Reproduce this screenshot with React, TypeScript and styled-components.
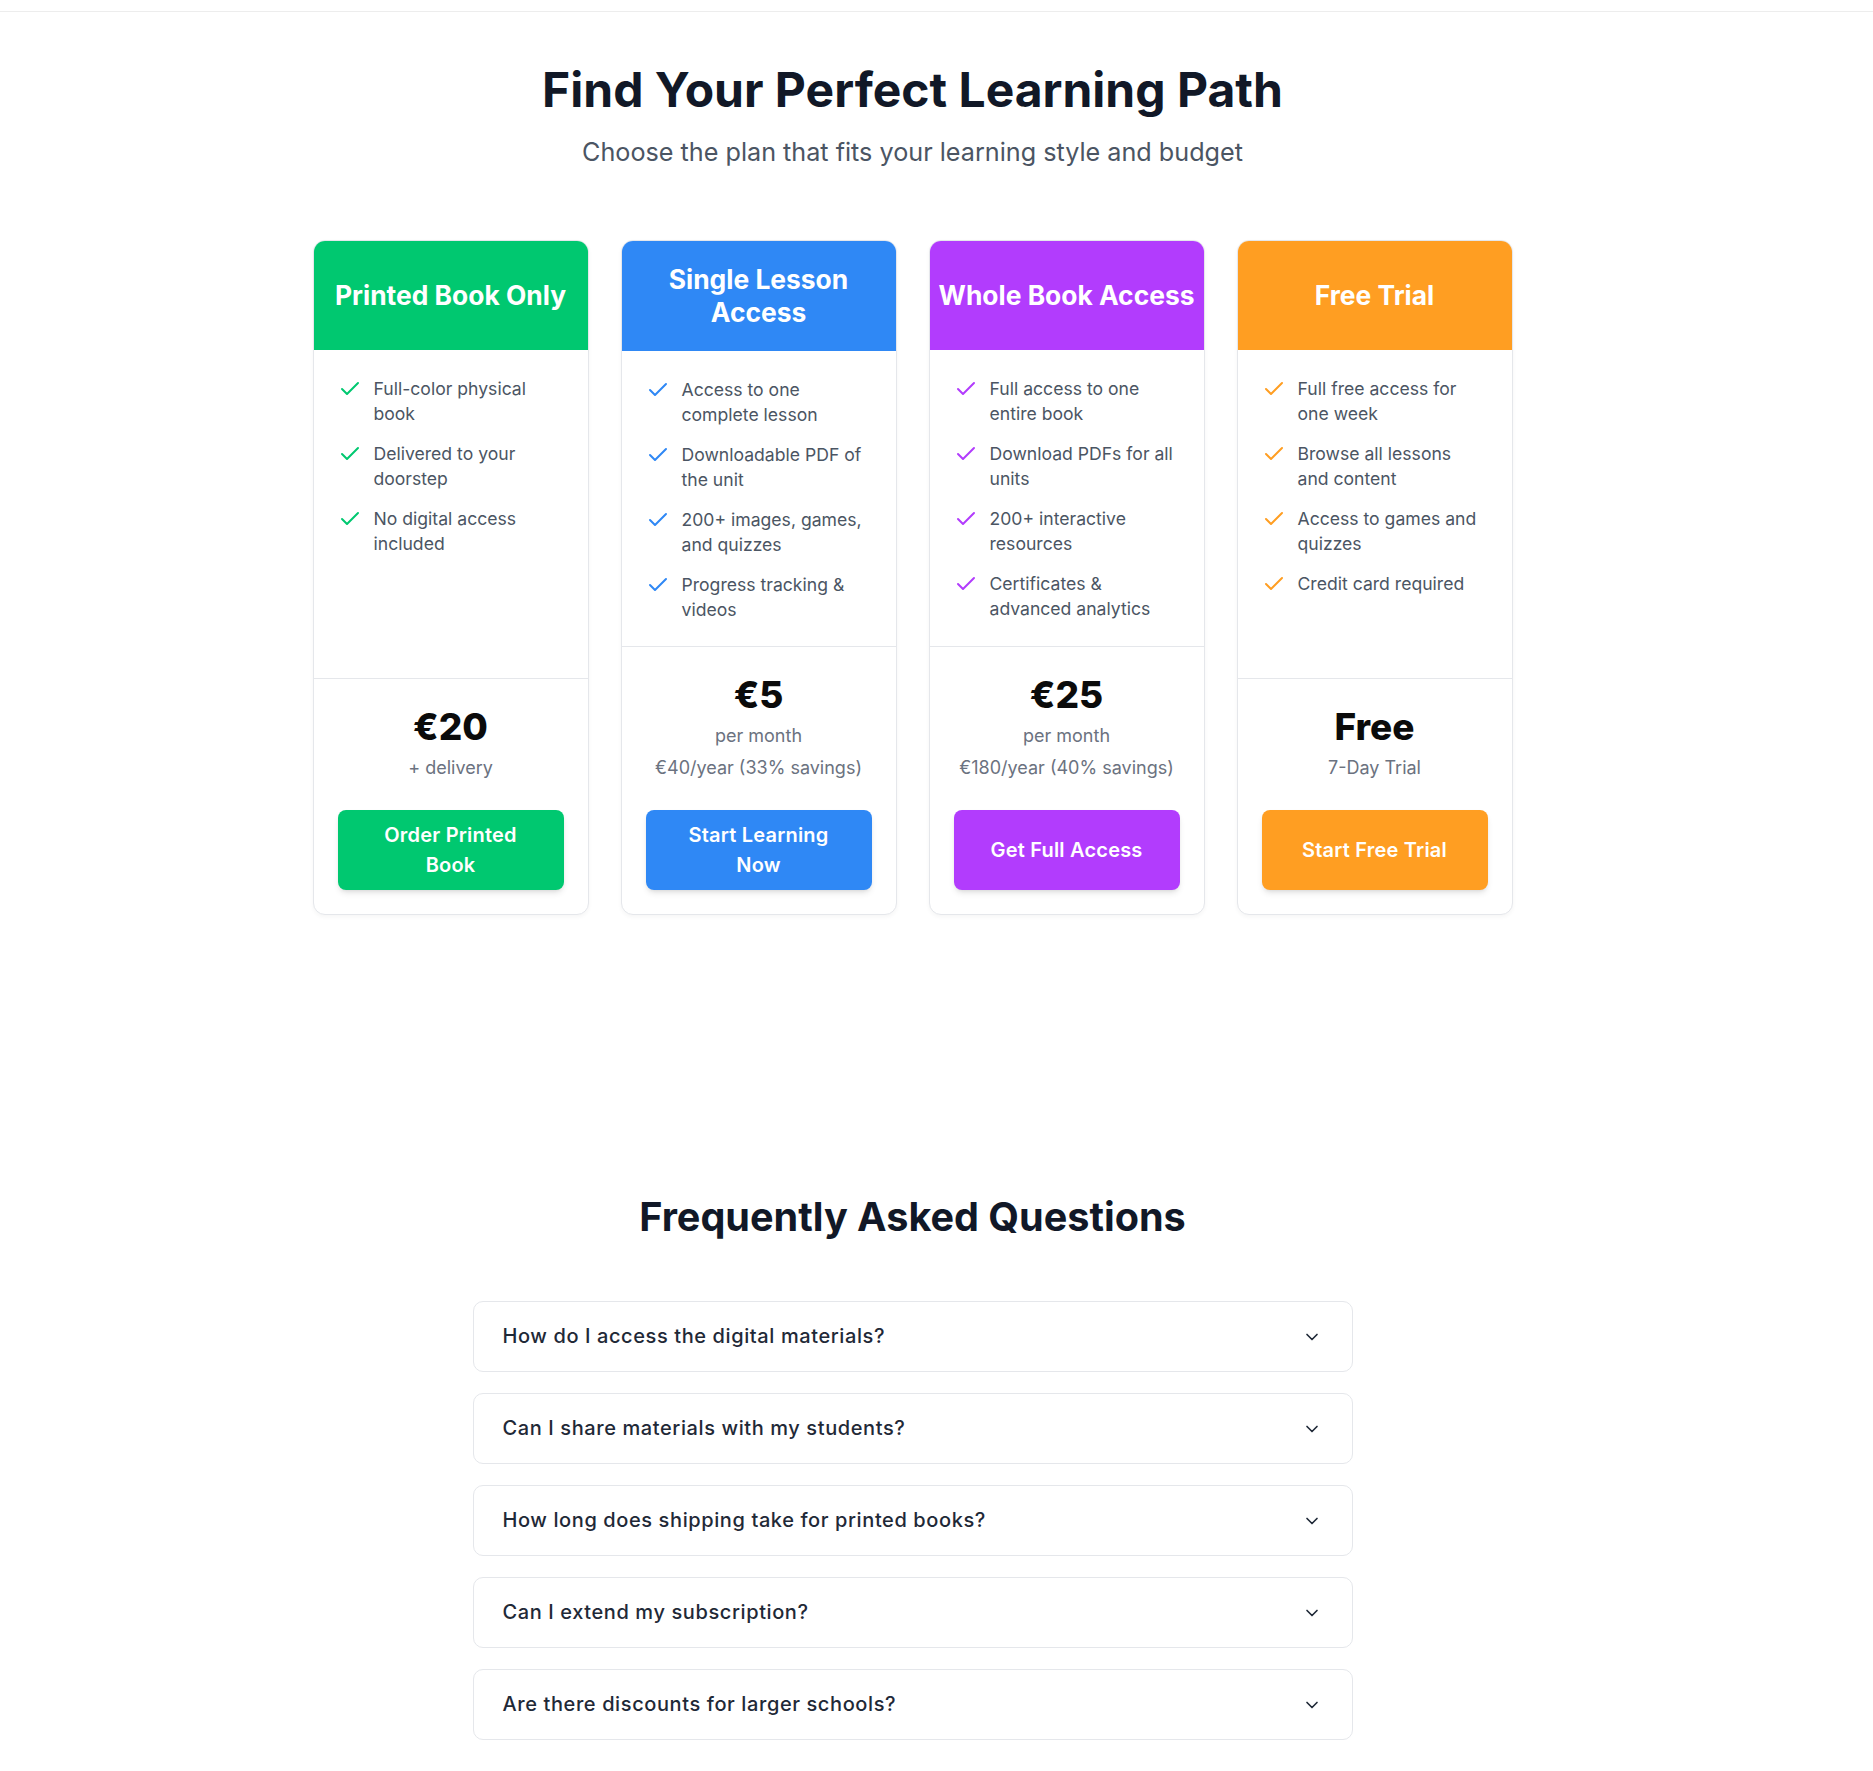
import React from 'react';
import styled, { createGlobalStyle } from 'styled-components';
import { Check, ChevronDown } from 'lucide-react';

const GlobalStyle = createGlobalStyle`
  *, *::before, *::after { box-sizing: border-box; }
  body {
    margin: 0;
    background: #ffffff;
    font-family: Inter, "Noto Sans", sans-serif;
    color: #111827;
  }
`;

type Plan = {
  title: string;
  color: string;
  features: string[];
  price: string;
  notes: string[];
  cta: string;
};

const plans: Plan[] = [
  {
    title: 'Printed Book Only',
    color: '#00c870',
    features: ['Full-color physical book', 'Delivered to your doorstep', 'No digital access included'],
    price: '€20',
    notes: ['+ delivery'],
    cta: 'Order Printed Book',
  },
  {
    title: 'Single Lesson Access',
    color: '#2f88f5',
    features: [
      'Access to one complete lesson',
      'Downloadable PDF of the unit',
      '200+ images, games, and quizzes',
      'Progress tracking & videos',
    ],
    price: '€5',
    notes: ['per month', '€40/year (33% savings)'],
    cta: 'Start Learning Now',
  },
  {
    title: 'Whole Book Access',
    color: '#b23cfd',
    features: [
      'Full access to one entire book',
      'Download PDFs for all units',
      '200+ interactive resources',
      'Certificates & advanced analytics',
    ],
    price: '€25',
    notes: ['per month', '€180/year (40% savings)'],
    cta: 'Get Full Access',
  },
  {
    title: 'Free Trial',
    color: '#ff9e22',
    features: [
      'Full free access for one week',
      'Browse all lessons and content',
      'Access to games and quizzes',
      'Credit card required',
    ],
    price: 'Free',
    notes: ['7-Day Trial'],
    cta: 'Start Free Trial',
  },
];

const faqs = [
  'How do I access the digital materials?',
  'Can I share materials with my students?',
  'How long does shipping take for printed books?',
  'Can I extend my subscription?',
  'Are there discounts for larger schools?',
];

const Shell = styled.div`
  min-height: 100vh;
  background: #ffffff;
`;

const TopBar = styled.div`
  height: 12px;
  border-bottom: 1px solid #ededed;
`;

const Main = styled.main`
  padding-right: 48px;
  padding-bottom: 32px;
`;

const PricingSection = styled.section`
  max-width: 1200px;
  margin: 0 auto;
  padding-top: 49px;
`;

const Title = styled.h1`
  margin: 0;
  text-align: center;
  font-size: 48px;
  line-height: 1.2;
  font-weight: 700;
  color: #111827;
`;

const Subtitle = styled.p`
  margin: 15px 0 0;
  text-align: center;
  font-size: 25.2px;
  line-height: 1.5;
  color: #4b5563;
`;

const CardGrid = styled.div`
  margin-top: 69px;
  display: grid;
  grid-template-columns: repeat(4, 1fr);
  gap: 32px;
  align-items: stretch;
`;

const Card = styled.article`
  display: flex;
  flex-direction: column;
  background: #ffffff;
  border: 1px solid #e5e7eb;
  border-radius: 12px;
  overflow: hidden;
  box-shadow: 0 2px 4px rgba(0, 0, 0, 0.04);
`;

const CardHeader = styled.header<{ $color: string }>`
  min-height: 109px;
  padding: 22px 6px;
  display: flex;
  align-items: center;
  justify-content: center;
  background: ${(p) => p.$color};
`;

const CardTitle = styled.h3`
  margin: 0;
  text-align: center;
  color: #ffffff;
  font-size: 26.4px;
  line-height: 1.25;
  font-weight: 700;
`;

const Features = styled.ul`
  flex: 1;
  margin: 0;
  list-style: none;
  padding: 26px 27px 24px 24px;
  display: flex;
  flex-direction: column;
  gap: 15px;
`;

const FeatureItem = styled.li<{ $color: string }>`
  display: flex;
  align-items: flex-start;
  gap: 12px;
  font-size: 17.6px;
  line-height: 25px;
  color: #4b5563;

  svg {
    flex-shrink: 0;
    margin-top: 1px;
    color: ${(p) => p.$color};
  }
`;

const Pricing = styled.div`
  border-top: 1px solid #e5e7eb;
  padding: 24px;
  display: flex;
  flex-direction: column;
  align-items: stretch;
  text-align: center;
`;

const Price = styled.div`
  padding-top: 2.4px;
  font-size: 37px;
  line-height: 42px;
  font-weight: 800;
  color: #0b0b0b;
`;

const PriceNote = styled.div`
  margin-top: 8px;
  font-size: 18px;
  line-height: 24px;
  color: #6b7280;
`;

const CtaButton = styled.button<{ $color: string }>`
  margin-top: 30px;
  min-height: 80px;
  padding: 10px 32px;
  border: none;
  border-radius: 8px;
  background: ${(p) => p.$color};
  color: #ffffff;
  font-family: inherit;
  font-size: 20px;
  line-height: 30px;
  font-weight: 600;
  letter-spacing: 0.2px;
  cursor: pointer;
  box-shadow: 0 4px 6px -1px rgba(0, 0, 0, 0.1), 0 2px 4px -2px rgba(0, 0, 0, 0.1);
`;

const FaqSection = styled.section`
  max-width: 880px;
  margin: 279px auto 0;
`;

const FaqTitle = styled.h2`
  margin: 0;
  text-align: center;
  font-size: 39.6px;
  line-height: 1.2;
  font-weight: 700;
  color: #111827;
`;

const FaqList = styled.div`
  margin-top: 60px;
  display: flex;
  flex-direction: column;
  gap: 21px;
`;

const FaqItem = styled.button`
  width: 100%;
  display: flex;
  align-items: center;
  justify-content: space-between;
  padding: 20px 30px 20px 29px;
  background: #ffffff;
  border: 1px solid #e5e7eb;
  border-radius: 10px;
  font-family: inherit;
  font-size: 20px;
  line-height: 29px;
  font-weight: 500;
  letter-spacing: 0.6px;
  color: #1f2937;
  text-align: left;
  cursor: pointer;

  svg {
    flex-shrink: 0;
    color: #1f2937;
  }
`;

export default function App() {
  return (
    <Shell>
      <GlobalStyle />
      <TopBar />
      <Main>
        <PricingSection>
          <Title>Find Your Perfect Learning Path</Title>
          <Subtitle>Choose the plan that fits your learning style and budget</Subtitle>
          <CardGrid>
            {plans.map((plan) => (
              <Card key={plan.title}>
                <CardHeader $color={plan.color}>
                  <CardTitle>{plan.title}</CardTitle>
                </CardHeader>
                <Features>
                  {plan.features.map((f) => (
                    <FeatureItem key={f} $color={plan.color}>
                      <Check size={24} strokeWidth={2} />
                      <span>{f}</span>
                    </FeatureItem>
                  ))}
                </Features>
                <Pricing>
                  <Price>{plan.price}</Price>
                  {plan.notes.map((n) => (
                    <PriceNote key={n}>{n}</PriceNote>
                  ))}
                  <CtaButton $color={plan.color}>{plan.cta}</CtaButton>
                </Pricing>
              </Card>
            ))}
          </CardGrid>
        </PricingSection>
        <FaqSection>
          <FaqTitle>Frequently Asked Questions</FaqTitle>
          <FaqList>
            {faqs.map((q) => (
              <FaqItem key={q}>
                <span>{q}</span>
                <ChevronDown size={20} strokeWidth={2} />
              </FaqItem>
            ))}
          </FaqList>
        </FaqSection>
      </Main>
    </Shell>
  );
}
